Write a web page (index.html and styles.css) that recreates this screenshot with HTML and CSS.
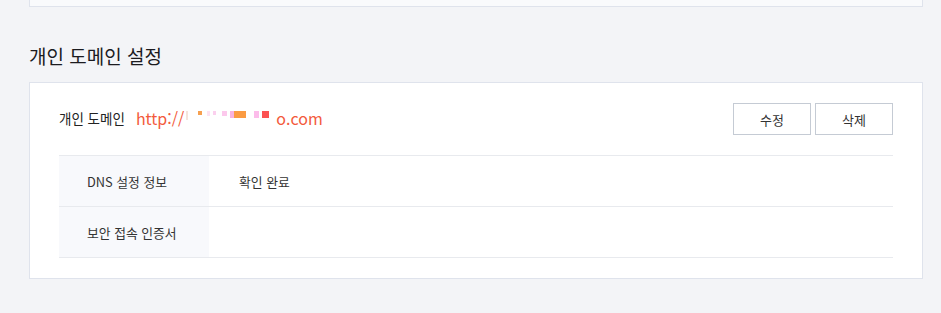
FILE: index.html
```html
<!DOCTYPE html>
<html lang="ko">
<head>
<meta charset="utf-8">
<title>개인 도메인 설정</title>
<link rel="stylesheet" href="styles.css">
</head>
<body>
<div class="page">
  <div class="prev-card"></div>
  <h2 class="section-title">개인 도메인 설정</h2>
  <section class="card">
    <div class="domain-row">
      <div class="domain-info">
        <span class="domain-label">개인 도메인</span>
        <span class="domain-url">http://<span class="redact"><i class="b b1"></i><i class="b b2"></i><i class="b b3"></i><i class="b b4"></i><i class="b b5"></i><i class="b b6"></i><i class="b b7"></i><i class="b b8"></i><i class="b b9"></i></span>o.com</span>
      </div>
      <div class="actions">
        <button class="btn" type="button">수정</button>
        <button class="btn" type="button">삭제</button>
      </div>
    </div>
    <div class="info-table">
      <div class="info-row">
        <div class="info-key">DNS 설정 정보</div>
        <div class="info-val">확인 완료</div>
      </div>
      <div class="info-row">
        <div class="info-key">보안 접속 인증서</div>
        <div class="info-val"></div>
      </div>
    </div>
  </section>
</div>
</body>
</html>
```

FILE: styles.css
```css
* { box-sizing: border-box; }
html, body {
  margin: 0;
  padding: 0;
  background: #f3f4f7;
}
body {
  font-family: "Noto Sans CJK KR", "Noto Sans", sans-serif;
  color: #222;
}
.page {
  width: 941px;
  height: 313px;
  padding: 0 18px 0 29px;
  overflow: hidden;
}
.prev-card {
  height: 7px;
  background: #f9fafc;
  border: 1px solid #dfe3ec;
  border-top: 0;
}
.section-title {
  margin: 0;
  padding-top: 34px;
  height: 75px;
  font-size: 19px;
  line-height: 30px;
  font-weight: 400;
  color: #1b1b1f;
}
.card {
  background: #fff;
  border: 1px solid #dfe3ec;
  padding: 20px 29px 20px 29px;
}
.domain-row {
  display: flex;
  align-items: center;
  justify-content: space-between;
  height: 32px;
  margin-bottom: 20px;
}
.domain-info {
  display: flex;
  align-items: center;
  gap: 11px;
  height: 32px;
  margin-top: -3px;
}
.domain-label {
  font-size: 13.5px;
  color: #222;
}
.domain-url {
  font-family: "Noto Sans CJK KR", "Noto Sans", sans-serif;
  font-size: 16px;
  color: #f35a3c;
  display: inline-flex;
  align-items: center;
}
.redact {
  display: inline-flex;
  align-items: flex-start;
  width: 92px;
  height: 18px;
  padding-top: 2px;
}
.b { display: block; font-style: normal; }
.b1 { width: 2px; height: 9px; margin-left: 2px; background: #f4e4dc; }
.b2 { width: 4px; height: 4px; margin-left: 10px; background: #f6a050; }
.b3 { width: 3px; height: 5px; margin-left: 5px; background: #fde2f2; }
.b4 { width: 3px; height: 4px; margin-left: 3px; background: #fbd0ee; }
.b5 { width: 5px; height: 5px; margin-left: 6px; background: #fcc8ec; }
.b6 { width: 4px; height: 7px; margin-left: 3px; background: #f8b2de; }
.b7 { width: 12px; height: 7px; background: #fb9b42; }
.b8 { width: 5px; height: 7px; margin-left: 8px; background: #fcbcea; }
.b9 { width: 7px; height: 7px; margin-left: 3px; background: #fc5252; }
.actions {
  display: flex;
  gap: 4px;
}
.btn {
  width: 78px;
  height: 32px;
  background: #fff;
  border: 1px solid #c5cbd4;
  border-radius: 0;
  font-family: "Noto Sans CJK KR", "Noto Sans", sans-serif;
  font-size: 13px;
  color: #333;
  padding: 0;
  cursor: pointer;
}
.info-table {
  border-top: 1px solid #e8eaee;
}
.info-row {
  display: flex;
  height: 51px;
  border-bottom: 1px solid #e8eaee;
}
.info-key {
  width: 150px;
  background: #f8f9fc;
  padding-left: 28px;
  display: flex;
  align-items: center;
  font-size: 12.8px;
  color: #333;
}
.info-val {
  flex: 1;
  padding-left: 30px;
  display: flex;
  align-items: center;
  font-size: 12.8px;
  color: #333;
}
```
